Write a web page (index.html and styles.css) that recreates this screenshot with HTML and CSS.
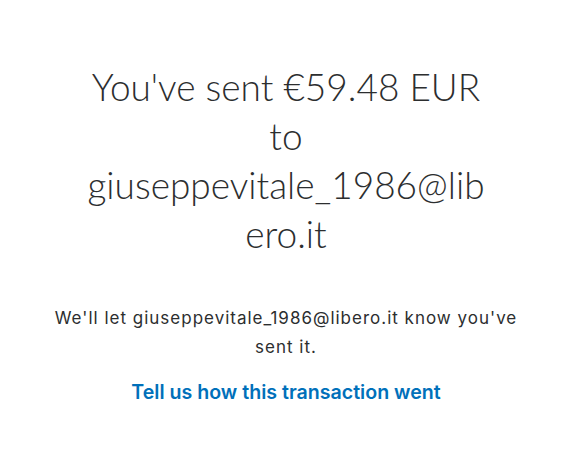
FILE: index.html
```html
<!DOCTYPE html>
<html lang="en">
<head>
<meta charset="utf-8">
<link rel="stylesheet" href="styles.css">
</head>
<body>
<main class="page">
  <h1 class="title">You've sent €59.48 EUR to giuseppevitale_1986@libero.it</h1>
  <p class="note">We'll let giuseppevitale_1986@libero.it know you've sent it.</p>
  <a class="link" href="#">Tell us how this transaction went</a>
</main>
</body>
</html>
```
FILE: styles.css
```css
html, body {
  margin: 0;
  padding: 0;
  background: #ffffff;
}
.page {
  display: flex;
  flex-direction: column;
  align-items: center;
  padding-top: 62px;
  font-family: Inter, "Noto Sans", sans-serif;
  color: #2c2e2f;
  text-align: center;
}
.title {
  width: 416px;
  margin: 0;
  font-family: Lato, "Noto Sans", sans-serif;
  font-size: 37px;
  font-weight: 300;
  line-height: 49px;
  overflow-wrap: anywhere;
  color: #2c2e2f;
}
.note {
  width: 490px;
  margin: 46px 0 0;
  font-size: 17px;
  letter-spacing: 1px;
  line-height: 29px;
}
.link {
  display: block;
  margin-top: 18px;
  font-size: 19.6px;
  font-weight: 600;
  line-height: 24px;
  color: #0070ba;
  text-decoration: none;
}
```
